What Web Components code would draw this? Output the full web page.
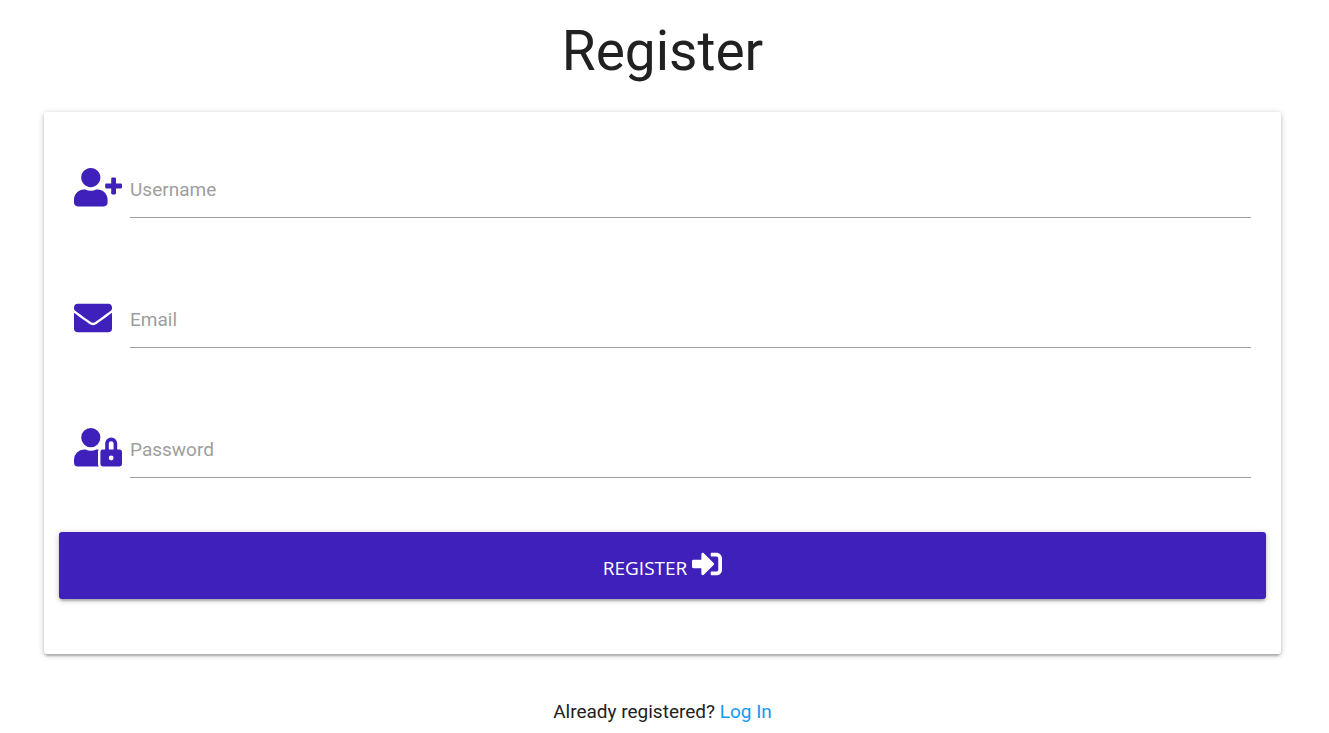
<!DOCTYPE html>
<html lang="en">
<head>
<meta charset="utf-8">
<meta name="viewport" content="width=device-width, initial-scale=1">
<title>Register</title>
<style>
  body { margin: 0; background: #fff; color: #212121; font: 19px/28px Roboto, sans-serif; --brand: #4020bb; --link: #119af0; }
</style>
</head>
<body>
<register-page></register-page>

<script>
const ICONS = {
  'user-plus': [640, 'M624 208h-64v-64c0-8.8-7.2-16-16-16h-32c-8.8 0-16 7.2-16 16v64h-64c-8.8 0-16 7.2-16 16v32c0 8.8 7.2 16 16 16h64v64c0 8.8 7.2 16 16 16h32c8.8 0 16-7.2 16-16v-64h64c8.8 0 16-7.2 16-16v-32c0-8.8-7.2-16-16-16zm-400 48c70.7 0 128-57.3 128-128S294.7 0 224 0 96 57.3 96 128s57.3 128 128 128zm89.6 32h-16.7c-22.2 10.2-46.9 16-72.9 16s-50.6-5.8-72.9-16h-16.7C60.2 288 0 348.2 0 422.4V464c0 26.5 21.5 48 48 48h352c26.5 0 48-21.5 48-48v-41.6c0-74.2-60.2-134.4-134.4-134.4z'],
  'envelope': [512, 'M502.3 190.8c3.9-3.1 9.7-.2 9.7 4.7V400c0 26.5-21.5 48-48 48H48c-26.5 0-48-21.5-48-48V195.6c0-5 5.7-7.8 9.7-4.7 22.4 17.4 52.1 39.5 154.1 113.6 21.1 15.4 56.7 47.8 92.2 47.6 35.7.3 72-32.8 92.3-47.6 102-74.1 131.6-96.3 154-113.7zM256 320c23.2.4 56.6-29.2 73.4-41.4 132.7-96.3 142.8-104.7 173.4-128.7 5.8-4.5 9.2-11.5 9.2-18.9v-19c0-26.5-21.5-48-48-48H48c-26.5 0-48 21.5-48 48v19c0 7.4 3.4 14.3 9.2 18.9 30.6 23.9 40.7 32.4 173.4 128.7 16.8 12.2 50.2 41.8 73.4 41.4z'],
  'user-lock': [640, 'M224 256A128 128 0 1 0 96 128a128 128 0 0 0 128 128zm96 64a63.08 63.08 0 0 1 8.1-30.5c-4.8-.5-9.5-1.5-14.5-1.5h-16.7a174.08 174.08 0 0 1-145.8 0h-16.7A134.43 134.43 0 0 0 0 422.4V464a48 48 0 0 0 48 48h280.9a63.54 63.54 0 0 1-8.9-32zm288-32h-32v-80a80 80 0 0 0-160 0v80h-32a32 32 0 0 0-32 32v160a32 32 0 0 0 32 32h224a32 32 0 0 0 32-32V320a32 32 0 0 0-32-32zM496 432a32 32 0 1 1 32-32 32 32 0 0 1-32 32zm32-144h-64v-80a32 32 0 0 1 64 0z'],
  'sign-in': [512, 'M416 448h-84c-6.6 0-12-5.4-12-12v-40c0-6.6 5.4-12 12-12h84c17.7 0 32-14.3 32-32V160c0-17.7-14.3-32-32-32h-84c-6.6 0-12-5.4-12-12V76c0-6.6 5.4-12 12-12h84c53 0 96 43 96 96v192c0 53-43 96-96 96zm-47-209L201 71c-15-15-41-4.5-41 17v96H24c-13.3 0-24 10.7-24 24v96c0 13.3 10.7 24 24 24h136v96c0 21.5 26 32 41 17l168-168c9.3-9.4 9.3-24.6 0-34z']
};

const shadow = (host, html) => { host.attachShadow({ mode: 'open' }).innerHTML = html; };

/* Solid glyph, sized by --icon-width on its user */
customElements.define('app-icon', class extends HTMLElement {
  constructor() {
    super();
    const [width, path] = ICONS[this.getAttribute('name')];
    shadow(this, `
      <style>
        :host { display: inline-block; width: var(--icon-width, 38px); }
        svg { display: block; width: 100%; fill: currentColor; }
      </style>
      <svg viewBox="0 0 ${width} 512" aria-hidden="true"><path d="${path}"/></svg>`);
  }
});

/* Icon plus underlined text box; the label gives way once there is a value */
customElements.define('text-field', class extends HTMLElement {
  constructor() {
    super();
    shadow(this, `
      <style>
        :host { display: grid; grid-template-columns: 56px 1fr; align-items: center; }
        .icon { color: var(--brand); display: flex; padding-bottom: 4px; }
        .box { display: grid; align-items: center; }
        label, input { grid-area: 1 / 1; }
        label { color: #9e9e9e; cursor: text; }
        input {
          box-sizing: border-box; width: 100%; height: 57px; margin: 0; padding: 0;
          border: 0; border-bottom: 1px solid #9e9e9e; border-radius: 0; outline: 0;
          background: none; color: inherit; font: inherit;
        }
        input:focus { border-color: var(--brand); }
        input:not(:placeholder-shown) + label { visibility: hidden; }
      </style>
      <div class="icon"><slot name="icon"></slot></div>
      <div class="box">
        <input id="field" type="${this.getAttribute('type')}" placeholder=" ">
        <label for="field"><slot></slot></label>
      </div>`);
  }
});

customElements.define('submit-button', class extends HTMLElement {
  constructor() {
    super();
    shadow(this, `
      <style>
        :host { display: block; --icon-width: 30px; }
        button {
          display: block; width: 100%; height: 67px; margin: 0; padding: 5px 0 0; border: 0; border-radius: 3px;
          background: var(--brand); color: #fff; cursor: pointer;
          font: 19px/40px "Open Sans", "Noto Sans", sans-serif; text-transform: uppercase;
          box-shadow: 0 2px 3px rgba(0,0,0,.14), 0 4px 2px -2px rgba(0,0,0,.12), 0 1px 6px rgba(0,0,0,.2);
        }
        app-icon { vertical-align: -4px; }
      </style>
      <button type="submit"><slot></slot> <app-icon name="sign-in"></app-icon></button>`);
  }
});

customElements.define('form-card', class extends HTMLElement {
  constructor() {
    super();
    shadow(this, `
      <style>
        :host {
          display: block; padding: 49px 15px 55px; border-radius: 3px; background: #fff;
          box-shadow: 0 2px 3px rgba(0,0,0,.14), 0 4px 2px -2px rgba(0,0,0,.12), 0 1px 6px rgba(0,0,0,.2);
        }
        form { margin: 0; }
        .fields { display: grid; gap: 73px; padding: 0 15px 54px; }
      </style>
      <form>
        <div class="fields"><slot></slot></div>
        <slot name="action"></slot>
      </form>`);
  }
});

customElements.define('register-page', class extends HTMLElement {
  constructor() {
    super();
    shadow(this, `
      <style>
        :host { display: block; padding: 21px 48px 0 44px; }
        h1 { margin: 0 0 31px; font-size: 55px; line-height: 60px; font-weight: 400; text-align: center; }
        text-field { --icon-width: 48px; }
        text-field[type="email"] { --icon-width: 38px; }
        p { margin: 44px 0 0; text-align: center; }
        a { color: var(--link); text-decoration: none; }
      </style>
      <h1>Register</h1>
      <form-card>
        <text-field type="text"><app-icon slot="icon" name="user-plus"></app-icon>Username</text-field>
        <text-field type="email"><app-icon slot="icon" name="envelope"></app-icon>Email</text-field>
        <text-field type="password"><app-icon slot="icon" name="user-lock"></app-icon>Password</text-field>
        <submit-button slot="action">Register</submit-button>
      </form-card>
      <p>Already registered? <a href="#login">Log In</a></p>`);
  }
});
</script>
</body>
</html>
